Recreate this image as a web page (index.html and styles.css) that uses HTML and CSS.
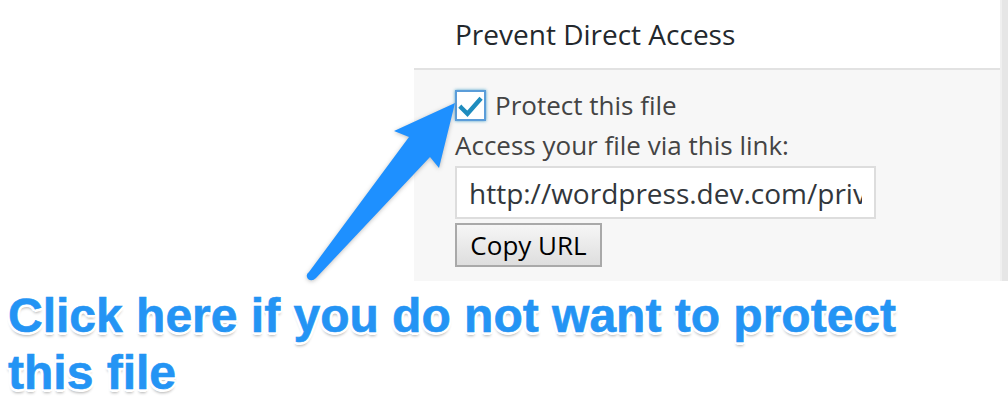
FILE: index.html
```html
<!DOCTYPE html>
<html lang="en">
<head>
<meta charset="utf-8">
<title>Prevent Direct Access</title>
<link rel="stylesheet" href="styles.css">
</head>
<body>
<div class="page">
  <div class="panel">
    <div class="panel-main">
      <div class="panel-header">Prevent Direct Access</div>
      <div class="panel-body">
        <label class="check-row">
          <span class="checkbox">
            <svg viewBox="0 0 31 31" width="27" height="27" aria-hidden="true">
              <path d="M5 18 L12 25 L26 9" fill="none" stroke="#1e8cbe" stroke-width="5" stroke-linecap="square" stroke-linejoin="miter"/>
            </svg>
          </span>
          <span class="check-label">Protect this file</span>
        </label>
        <div class="access-label">Access your file via this link:</div>
        <input class="url-input" type="text" value="http://wordpress.dev.com/private/wp-content/uploads/file.pdf" readonly>
        <div><button class="copy-btn" type="button">Copy URL</button></div>
      </div>
    </div>
    <div class="panel-strip"></div>
  </div>
  <div class="caption">Click here if you do not want to protect<br>this file</div>
  <svg class="arrow" width="1008" height="420" viewBox="0 0 1008 420" aria-hidden="true">
    <path d="M309 272 L409 137 L394 131 L455 103 L439 168 L430 157 L316 278 Q312 282 308 279 Q305 275 309 272 Z" fill="#1e90ff"/>
  </svg>
</div>
</body>
</html>
```
FILE: styles.css
```css
html, body {
  margin: 0;
  padding: 0;
  background: #ffffff;
}

.page {
  position: relative;
  width: 1008px;
  height: 420px;
  overflow: hidden;
  font-family: "Open Sans", "Noto Sans", sans-serif;
}

.panel {
  display: flex;
  margin-left: 414px;
  width: 594px;
}

.panel-main {
  width: 586px;
}

.panel-strip {
  width: 6px;
  border-left: 2px solid #f0f0f0;
  background: #e6e6e6;
}

.panel-header {
  height: 68px;
  line-height: 68px;
  padding-left: 41px;
  font-size: 28px;
  color: #23282d;
  background: #ffffff;
  border-bottom: 2px solid #e2e2e2;
}

.panel-body {
  background: #f7f7f7;
  padding: 20px 0 14px 41px;
  color: #444444;
}

.check-row {
  display: flex;
  align-items: center;
  gap: 9px;
  height: 31px;
}

.checkbox {
  box-sizing: border-box;
  width: 31px;
  height: 31px;
  border: 2px solid #5b9dd9;
  background: #ffffff;
  box-shadow: 0 0 3px rgba(30, 140, 190, 0.8);
  display: flex;
  align-items: center;
  justify-content: center;
}

.check-label {
  font-size: 26px;
  line-height: 31px;
}

.access-label {
  font-size: 26px;
  line-height: 34px;
  margin-top: 7px;
}

.url-input {
  display: block;
  box-sizing: border-box;
  margin: 4px 0 0 0;
  width: 421px;
  height: 53px;
  padding: 0 12px;
  border: 2px solid #dddddd;
  background: #ffffff;
  font-family: "Open Sans", "Noto Sans", sans-serif;
  font-size: 28px;
  color: #32373c;
  outline: none;
}

.copy-btn {
  box-sizing: border-box;
  margin-top: 4px;
  width: 147px;
  height: 44px;
  padding: 0;
  border: 2px solid #a9a9a9;
  background: linear-gradient(#f6f6f6, #dedede);
  font-family: "Open Sans", "Noto Sans", sans-serif;
  font-size: 26px;
  color: #000000;
}

.caption {
  margin-top: 6px;
  padding-left: 8px;
  font-family: "Liberation Sans", Arial, sans-serif;
  font-weight: bold;
  font-size: 48px;
  line-height: 57px;
  color: #2494f4;
  -webkit-text-stroke: 0.6px #2494f4;
  text-shadow:
    2px 0 0 #fff, -2px 0 0 #fff, 0 2px 0 #fff, 0 -2px 0 #fff,
    2px 2px 0 #fff, -2px -2px 0 #fff, 2px -2px 0 #fff, -2px 2px 0 #fff,
    3px 0 0 #fff, -3px 0 0 #fff, 0 3px 0 #fff, 0 -3px 0 #fff,
    0 4px 3px rgba(0, 0, 0, 0.3);
}

.arrow {
  position: absolute;
  left: 0;
  top: 0;
  pointer-events: none;
  filter: drop-shadow(0 1px 2px rgba(0, 0, 0, 0.25));
}
```
